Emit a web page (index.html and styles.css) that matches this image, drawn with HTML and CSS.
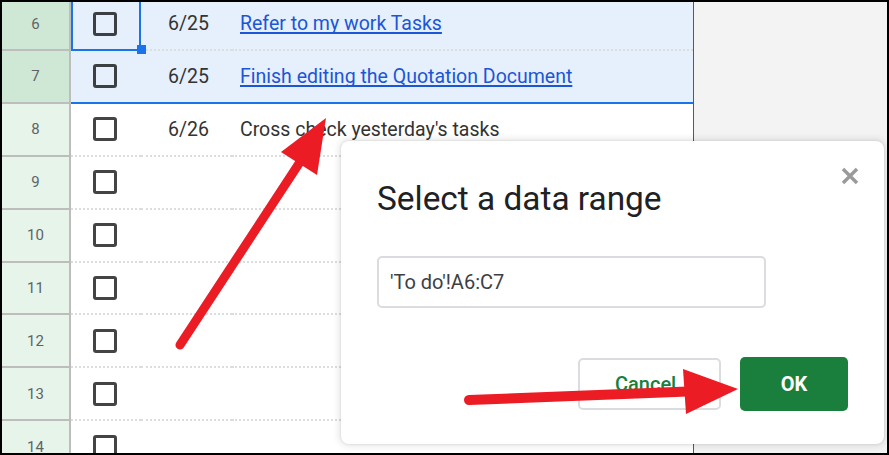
FILE: index.html
```html
<!DOCTYPE html>
<html>
<head>
<meta charset="utf-8">
<link rel="stylesheet" href="styles.css">
</head>
<body>
<div class="frame">
  <div class="sheet">
    <div class="row sel">
      <div class="rh">6</div>
      <div class="cell a active"><span class="cb"></span><span class="handle"></span></div>
      <div class="cell b">6/25</div>
      <div class="cell c"><a class="link">Refer to my work Tasks</a></div>
    </div>
    <div class="row sel last">
      <div class="rh">7</div>
      <div class="cell a"><span class="cb"></span></div>
      <div class="cell b">6/25</div>
      <div class="cell c"><a class="link">Finish editing the Quotation Document</a></div>
    </div>
    <div class="row">
      <div class="rh">8</div>
      <div class="cell a"><span class="cb"></span></div>
      <div class="cell b">6/26</div>
      <div class="cell c">Cross check yesterday's tasks</div>
    </div>
    <div class="row">
      <div class="rh">9</div>
      <div class="cell a"><span class="cb"></span></div>
      <div class="cell b"></div>
      <div class="cell c"></div>
    </div>
    <div class="row">
      <div class="rh">10</div>
      <div class="cell a"><span class="cb"></span></div>
      <div class="cell b"></div>
      <div class="cell c"></div>
    </div>
    <div class="row">
      <div class="rh">11</div>
      <div class="cell a"><span class="cb"></span></div>
      <div class="cell b"></div>
      <div class="cell c"></div>
    </div>
    <div class="row">
      <div class="rh">12</div>
      <div class="cell a"><span class="cb"></span></div>
      <div class="cell b"></div>
      <div class="cell c"></div>
    </div>
    <div class="row">
      <div class="rh">13</div>
      <div class="cell a"><span class="cb"></span></div>
      <div class="cell b"></div>
      <div class="cell c"></div>
    </div>
    <div class="row">
      <div class="rh">14</div>
      <div class="cell a"><span class="cb"></span></div>
      <div class="cell b"></div>
      <div class="cell c"></div>
    </div>
  </div>
  <div class="gray"></div>

  <div class="dialog">
    <div class="dlg-head">
      <div class="dlg-title">Select a data range</div>
      <svg class="close" width="18" height="18" viewBox="0 0 18 18">
        <path d="M2 2 L16 16 M16 2 L2 16" stroke="#9a9a9a" stroke-width="3.4" fill="none"/>
      </svg>
    </div>
    <div class="range-input">'To do'!A6:C7</div>
    <div class="dlg-actions">
      <div class="btn cancel">Cancel</div>
      <div class="btn ok">OK</div>
    </div>
  </div>

  <svg class="arrows" width="889" height="455" viewBox="0 0 889 455">
    <line x1="180" y1="345" x2="300" y2="162" stroke="#ec1c24" stroke-width="9" stroke-linecap="round"/>
    <polygon points="326,118 281,152 317,175" fill="#ec1c24"/>
    <line x1="469" y1="400" x2="688" y2="391.5" stroke="#ec1c24" stroke-width="10" stroke-linecap="round"/>
    <polygon points="738,389 683,369 686,414" fill="#ec1c24"/>
  </svg>
</div>
</body>
</html>
```

FILE: styles.css
```css
* { box-sizing: border-box; }
html, body { margin: 0; padding: 0; }
body {
  width: 889px;
  height: 455px;
  overflow: hidden;
  font-family: Roboto, "Liberation Sans", sans-serif;
  background: #000;
}
.frame {
  position: relative;
  width: 889px;
  height: 455px;
  border: 2px solid #000;
  background: #f3f3f3;
  display: flex;
  overflow: hidden;
}
.sheet {
  width: 692px;
  margin-top: -3.9px;
  height: calc(100% + 3.9px);
  background: #fff;
  border-right: 1px solid #1e7e34;
  display: flex;
  flex-direction: column;
}
.gray { flex: 1; background: #f3f3f3; }

.row {
  display: grid;
  grid-template-columns: 69px 70px 91px 1fr;
  height: 52.9px;
  flex: none;
}
.rh {
  background: #e6f4ea;
  border-right: 2px solid #bdbdbd;
  border-bottom: 2px solid #bdbdbd;
  color: #5f6368;
  font-size: 15px;
  display: flex;
  align-items: center;
  justify-content: center;
}
.row.sel .rh { background: #cfe8d6; }
.cell {
  border-bottom: 2px dotted #dddddd;
  display: flex;
  align-items: center;
  font-size: 19.5px;
  color: #333;
  position: relative;
  white-space: nowrap;
}
.row.sel .cell { background: #e6effc; }
.row.sel.last .cell { border-bottom: 2px solid #1a73e8; }
.cell.a { padding-left: 22px; }
.cell.b { padding-left: 27px; }
.cell.c { padding-left: 8px; }
.cb {
  width: 24px;
  height: 24px;
  border: 3px solid #444;
  border-radius: 3px;
}
.row.sel .cb { border-color: #3c4043; }
.cell.active::after {
  content: "";
  position: absolute;
  left: 0; top: 0; right: 0; bottom: -2px;
  border: 2px solid #1a73e8;
}
.handle {
  position: absolute;
  right: -5px;
  bottom: -5px;
  width: 9px;
  height: 9px;
  background: #1a73e8;
  z-index: 2;
}
.link {
  color: #1a56d6;
  text-decoration: underline;
  text-decoration-thickness: 2px;
  text-underline-offset: 2px;
  text-decoration-skip-ink: none;
}

.dialog {
  position: absolute;
  left: 339px;
  top: 139px;
  width: 543px;
  height: 303px;
  background: #fff;
  border-radius: 8px;
  box-shadow: 0 0 2px 1px rgba(0,0,0,0.06), 0 0 6px 3px rgba(0,0,0,0.08);
  padding: 38px 36px 0 36px;
  display: flex;
  flex-direction: column;
}
.dlg-head {
  display: flex;
  justify-content: space-between;
  align-items: flex-start;
}
.dlg-title {
  font-size: 33.4px;
  line-height: 40px;
  color: #202124;
}
.close {
  margin-top: -12px;
  margin-right: -11px;
  filter: blur(0.4px);
}
.range-input {
  margin-top: 37px;
  width: 389px;
  height: 52px;
  border: 2px solid #dadce0;
  border-radius: 5px;
  padding-left: 11px;
  display: flex;
  align-items: center;
  font-size: 20px;
  color: #3c4043;
}
.dlg-actions {
  margin-top: 49px;
  display: flex;
  justify-content: flex-end;
  align-items: center;
  gap: 19px;
  height: 54px;
}
.btn {
  display: flex;
  align-items: center;
  justify-content: center;
  border-radius: 5px;
}
.cancel {
  width: 143px;
  height: 52px;
  border: 2px solid #dadce0;
  color: #188038;
  font-size: 20px;
  font-weight: 500;
  justify-content: flex-start;
  padding-left: 35px;
}
.ok {
  width: 108px;
  height: 54px;
  background: #1a7f3c;
  color: #fff;
  font-size: 20px;
  font-weight: 700;
}
.arrows {
  position: absolute;
  left: -2px;
  top: -2px;
  pointer-events: none;
}
```
